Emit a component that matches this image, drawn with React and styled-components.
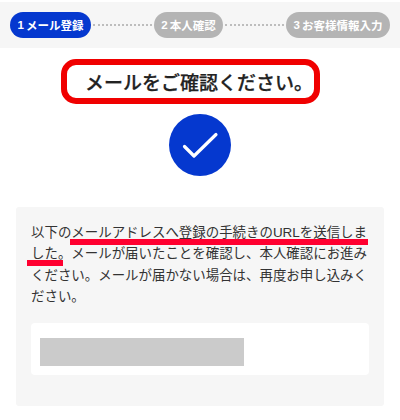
import styled, { createGlobalStyle } from "styled-components";

const GlobalStyle = createGlobalStyle`
  html, body {
    margin: 0;
    padding: 0;
    background: #fff;
  }
  body {
    font-family: "Liberation Sans", "Noto Sans CJK JP", sans-serif;
    color: #333;
  }
`;

const Page = styled.div`
  width: 400px;
  height: 420px;
  overflow: hidden;
  padding-top: 2px;
  box-sizing: border-box;
`;

const Steps = styled.div`
  display: flex;
  align-items: center;
  height: 46px;
  padding: 0 10px;
  background: #f6f6f6;
`;

const Step = styled.div`
  flex: none;
  width: ${({ $width }) => $width}px;
  height: 26px;
  border-radius: 13px;
  display: flex;
  align-items: center;
  justify-content: center;
  font-size: 11.5px;
  font-weight: 700;
  color: #fff;
  white-space: nowrap;
  background: ${({ $active }) => ($active ? "#0538cf" : "#b4b4b4")};
`;

const StepNumber = styled.span`
  margin-right: 2px;
`;

const Dots = styled.div`
  flex: 1;
  margin: 0 2px;
  border-top: 2px dotted #bdbdbd;
`;

const Title = styled.h1`
  box-sizing: border-box;
  width: 259px;
  height: 45px;
  margin: 11px 0 0 61px;
  padding-left: 18px;
  display: flex;
  align-items: center;
  border: 6px solid #f00000;
  border-radius: 15px;
  font-size: 19px;
  font-weight: 500;
  -webkit-text-stroke: 0.25px #222;
  color: #222;
  white-space: nowrap;
`;

const CheckCircle = styled.div`
  width: 62px;
  height: 62px;
  margin: 10px auto 0;
  border-radius: 50%;
  background: #0538cf;
`;

const Card = styled.section`
  box-sizing: border-box;
  width: 368px;
  height: 199px;
  margin: 31px auto 0;
  padding: 15px 15px 0;
  background: #f6f6f6;
  border-radius: 3px;
`;

const Message = styled.p`
  position: relative;
  margin: 0;
  height: 101px;
  font-size: 13.44px;
  line-height: 21.4px;
  color: #333;
`;

const Marker = styled.span`
  position: absolute;
  left: ${({ $left }) => $left}px;
  top: ${({ $top }) => $top}px;
  width: ${({ $width }) => $width}px;
  height: 6px;
  background: #ff0030;
`;

const AddressBox = styled.div`
  box-sizing: border-box;
  height: 52px;
  padding: 15px 9px 0;
  background: #fff;
  border-radius: 4px;
`;

const Redacted = styled.div`
  width: 204px;
  height: 28px;
  background: #cbcbcb;
`;

export default function App() {
  return (
    <Page>
      <GlobalStyle />
      <Steps>
        <Step $active $width={81}><StepNumber>1</StepNumber>メール登録</Step>
        <Dots />
        <Step $width={69}><StepNumber>2</StepNumber>本人確認</Step>
        <Dots />
        <Step $width={104}><StepNumber>3</StepNumber>お客様情報入力</Step>
      </Steps>
      <Title>メールをご確認ください。</Title>
      <CheckCircle>
        <svg width="62" height="62" viewBox="0 0 62 62" fill="none">
          <path
            d="M15.5 32.5 L25 42 L47 20.5"
            stroke="#fff"
            strokeWidth="3.2"
            strokeLinecap="round"
            strokeLinejoin="round"
          />
        </svg>
      </CheckCircle>
      <Card>
        <Message>
          以下のメールアドレスへ登録の手続きのURLを送信しました。メールが届いたことを確認し、本人確認にお進みください。メールが届かない場合は、再度お申し込みください。
          <Marker $left={39} $top={17} $width={298} />
          <Marker $left={-4} $top={38} $width={36} />
        </Message>
        <AddressBox>
          <Redacted />
        </AddressBox>
      </Card>
    </Page>
  );
}
